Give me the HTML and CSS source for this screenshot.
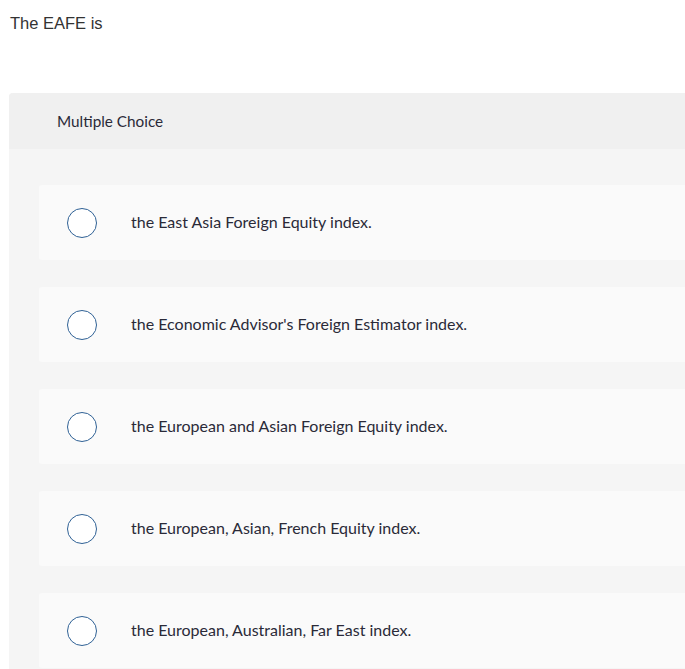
FILE: index.html
```html
<!DOCTYPE html>
<html>
<head>
<meta charset="utf-8">
<link rel="stylesheet" href="styles.css">
</head>
<body>
<div class="question">The EAFE is</div>
<div class="panel">
  <div class="panel-header">Multiple Choice</div>
  <div class="options">
    <div class="option"><span class="radio"></span><span class="label">the East Asia Foreign Equity index.</span></div>
    <div class="option"><span class="radio"></span><span class="label">the Economic Advisor's Foreign Estimator index.</span></div>
    <div class="option"><span class="radio"></span><span class="label">the European and Asian Foreign Equity index.</span></div>
    <div class="option"><span class="radio"></span><span class="label">the European, Asian, French Equity index.</span></div>
    <div class="option"><span class="radio"></span><span class="label">the European, Australian, Far East index.</span></div>
  </div>
</div>
</body>
</html>
```
FILE: styles.css
```css
html, body {
  margin: 0;
  padding: 0;
  overflow: hidden;
  background: #ffffff;
}
.question {
  font-family: "Liberation Sans", Arial, sans-serif;
  font-size: 16.5px;
  color: #333333;
  padding: 13px 10px 0 10px;
  height: 93px;
  box-sizing: border-box;
  line-height: 20px;
}
.panel {
  margin-left: 9px;
  background: #f5f5f5;
  border-top-left-radius: 4px;
  overflow: hidden;
  font-family: Lato, "Open Sans", sans-serif;
}
.panel-header {
  height: 56px;
  background: #f0f0f0;
  display: flex;
  align-items: center;
  padding-left: 48px;
  padding-bottom: 1px;
  box-sizing: border-box;
  font-size: 15.3px;
  color: #2a2a38;
}
.options {
  display: flex;
  flex-direction: column;
  gap: 27px;
  padding: 36px 0 10px 30px;
}
.option {
  height: 75px;
  background: #fafafa;
  border-top-left-radius: 3px;
  border-bottom-left-radius: 3px;
  display: flex;
  align-items: center;
  padding-left: 28px;
}
.radio {
  width: 28px;
  height: 28px;
  border: 1.5px solid #2f6195;
  border-radius: 50%;
  background: #ffffff;
  flex-shrink: 0;
}
.label {
  margin-left: 34px;
  margin-bottom: 3px;
  font-size: 16px;
  color: #2a2a38;
}
```
